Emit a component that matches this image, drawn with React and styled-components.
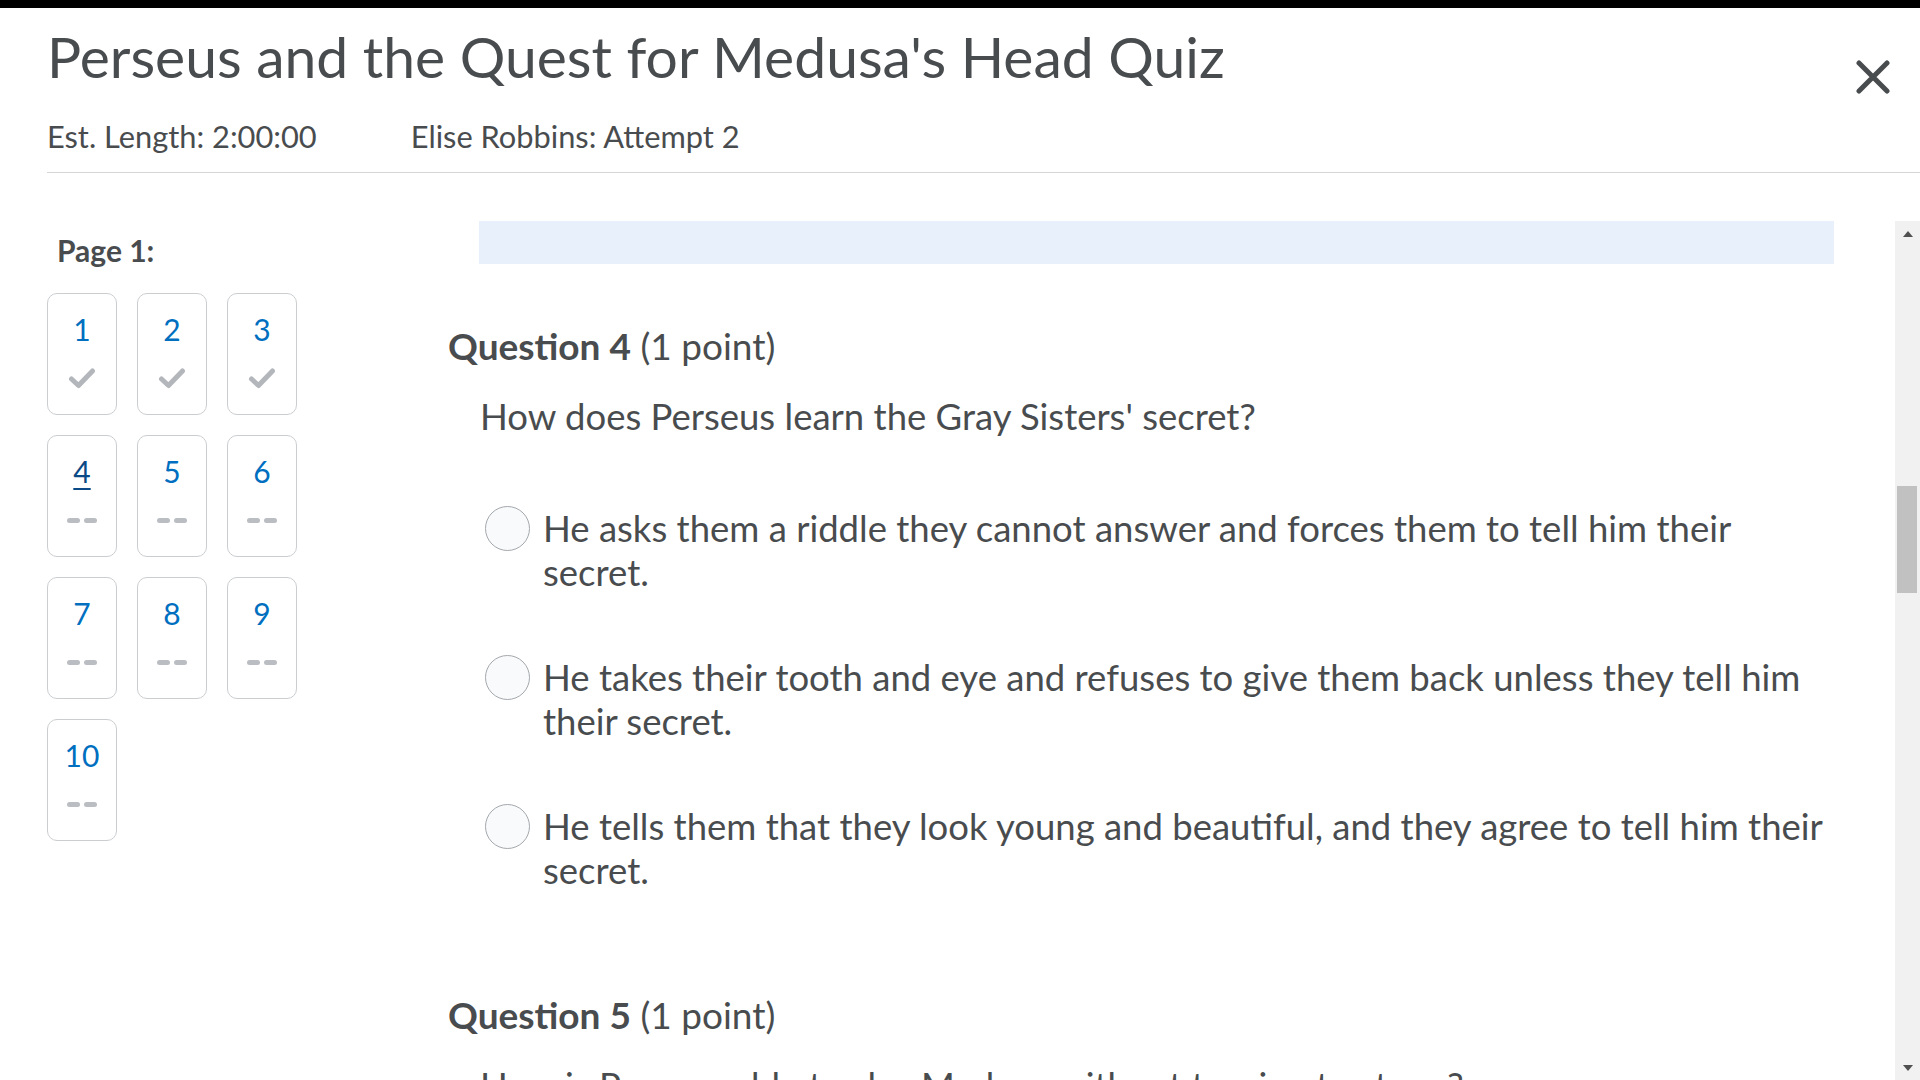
import React from 'react';
import styled, { createGlobalStyle } from 'styled-components';

const GlobalStyle = createGlobalStyle`
  html, body {
    margin: 0;
    padding: 0;
    background: #ffffff;
  }
  body {
    width: 1920px;
    height: 1080px;
    overflow: hidden;
    font-family: Lato, "Noto Sans", "Liberation Sans", sans-serif;
    color: #494c4e;
  }
  * { box-sizing: border-box; }
`;

const Page = styled.div`
  width: 1920px;
  height: 1080px;
  display: flex;
  flex-direction: column;
  overflow: hidden;
`;

const TopEdge = styled.div`
  flex: none;
  height: 8px;
  background: #000;
`;

const Header = styled.header`
  flex: none;
  padding-left: 47px;
`;

const TitleRow = styled.div`
  height: 82px;
  display: flex;
  justify-content: space-between;
  align-items: flex-start;
  padding-top: 15px;
`;

const Title = styled.h1`
  margin: 0;
  font-size: 57px;
  line-height: 67px;
  font-weight: 400;
  color: #494c4e;
`;

const CloseButton = styled.button`
  margin: 37px 30px 0 0;
  width: 34px;
  height: 34px;
  padding: 0;
  border: 0;
  background: none;
  display: flex;
  cursor: pointer;
`;

const Meta = styled.div`
  display: flex;
  gap: 94px;
  margin-top: 28px;
  font-size: 30.8px;
  line-height: 37px;
`;

const Divider = styled.div`
  margin-top: 17px;
  height: 1px;
  background: #d6d6d6;
`;

const Body = styled.div`
  flex: 1;
  min-height: 0;
  display: flex;
  margin-top: 48px;
`;

const Sidebar = styled.nav`
  flex: none;
  width: 420px;
  padding: 11px 0 0 47px;
`;

const PageLabel = styled.div`
  padding-left: 10px;
  font-size: 30px;
  line-height: 36px;
  font-weight: 700;
  color: #494c4e;
`;

const TileGrid = styled.div`
  margin-top: 25px;
  display: grid;
  grid-template-columns: repeat(3, 70px);
  column-gap: 20px;
  row-gap: 20px;
`;

const Tile = styled.div`
  width: 70px;
  height: 122px;
  border: 1px solid #cbced1;
  border-radius: 10px;
  background: #fff;
  display: flex;
  flex-direction: column;
  align-items: center;
  padding-top: 18px;
`;

const TileNumber = styled.span`
  font-size: 30px;
  line-height: 34px;
  color: ${(p) => (p.$current ? '#0b4a86' : '#006fbf')};
  text-decoration: ${(p) => (p.$current ? 'underline' : 'none')};
  text-decoration-thickness: 2px;
  text-underline-offset: 5px;
`;

const StatusSlot = styled.div`
  margin-top: 21px;
  height: 22px;
  display: flex;
  align-items: center;
  justify-content: center;
  gap: 4px;
`;

const Dash = styled.span`
  width: 13px;
  height: 5px;
  border-radius: 3px;
  background: #babec2;
`;

const Main = styled.main`
  flex: 1;
  min-width: 0;
  overflow: hidden;
  padding: 0 61px 0 28px;
`;

const Banner = styled.div`
  margin-left: 31px;
  height: 43px;
  background: #e8f1fb;
`;

const Question = styled.section`
  margin-top: 60px;
  & + & {
    margin-top: 101px;
  }
`;

const QuestionHeading = styled.h2`
  margin: 0;
  font-size: 37px;
  line-height: 44px;
  font-weight: 400;
  color: #494c4e;

  strong {
    font-weight: 700;
  }
`;

const QuestionBody = styled.div`
  padding-left: 32px;
`;

const Prompt = styled.p`
  margin: 26px 0 0;
  font-size: 36.5px;
  line-height: 44px;
`;

const AnswerList = styled.div`
  margin-top: 68px;
  display: flex;
  flex-direction: column;
  gap: 61px;
`;

const Answer = styled.label`
  display: flex;
  align-items: flex-start;
  gap: 13px;
  padding-left: 5px;
  cursor: pointer;
`;

const Radio = styled.span`
  flex: none;
  width: 45px;
  height: 45px;
  border-radius: 50%;
  border: 1px solid #a3a8ac;
  background: #f9fafc;
`;

const AnswerText = styled.span`
  max-width: 1288px;
  font-size: 36.5px;
  line-height: 44px;
`;

const ScrollTrack = styled.div`
  flex: none;
  width: 25px;
  background: #f1f1f1;
  display: flex;
  flex-direction: column;
`;

const ScrollButton = styled.div`
  flex: none;
  height: 25px;
  display: flex;
  align-items: center;
  justify-content: center;
  margin-top: ${(p) => (p.$down ? 'auto' : '0')};
`;

const Arrow = styled.span`
  width: 0;
  height: 0;
  border-left: 5px solid transparent;
  border-right: 5px solid transparent;
  ${(p) =>
    p.$down
      ? 'border-top: 6px solid #505050;'
      : 'border-bottom: 6px solid #505050;'}
`;

const Thumb = styled.div`
  margin: 240px 3px 0 2px;
  height: 107px;
  background: #c1c1c1;
`;

const Check = () => (
  <svg width="28" height="22" viewBox="0 0 28 22">
    <polyline
      points="3.5,12 10.5,18.5 24.5,4"
      fill="none"
      stroke="#b3b7bb"
      strokeWidth="5"
      strokeLinecap="round"
      strokeLinejoin="round"
    />
  </svg>
);

const CloseIcon = () => (
  <svg width="34" height="34" viewBox="0 0 34 34">
    <path
      d="M3 3 L31 31 M31 3 L3 31"
      stroke="#494c4e"
      strokeWidth="5"
      strokeLinecap="round"
      fill="none"
    />
  </svg>
);

const tiles = [
  { n: 1, done: true },
  { n: 2, done: true },
  { n: 3, done: true },
  { n: 4, current: true },
  { n: 5 },
  { n: 6 },
  { n: 7 },
  { n: 8 },
  { n: 9 },
  { n: 10 },
];

const answers = [
  'He asks them a riddle they cannot answer and forces them to tell him their secret.',
  'He takes their tooth and eye and refuses to give them back unless they tell him their secret.',
  'He tells them that they look young and beautiful, and they agree to tell him their secret.',
];

export default function App() {
  return (
    <>
      <GlobalStyle />
      <Page>
        <TopEdge />
        <Header>
          <TitleRow>
            <Title>Perseus and the Quest for Medusa's Head Quiz</Title>
            <CloseButton aria-label="Close">
              <CloseIcon />
            </CloseButton>
          </TitleRow>
          <Meta>
            <span>Est. Length: 2:00:00</span>
            <span>Elise Robbins: Attempt 2</span>
          </Meta>
          <Divider />
        </Header>
        <Body>
          <Sidebar>
            <PageLabel>Page 1:</PageLabel>
            <TileGrid>
              {tiles.map((t) => (
                <Tile key={t.n}>
                  <TileNumber $current={t.current}>{t.n}</TileNumber>
                  <StatusSlot>
                    {t.done ? (
                      <Check />
                    ) : (
                      <>
                        <Dash />
                        <Dash />
                      </>
                    )}
                  </StatusSlot>
                </Tile>
              ))}
            </TileGrid>
          </Sidebar>
          <Main>
            <Banner />
            <Question>
              <QuestionHeading>
                <strong>Question 4</strong> (1 point)
              </QuestionHeading>
              <QuestionBody>
                <Prompt>How does Perseus learn the Gray Sisters' secret?</Prompt>
                <AnswerList>
                  {answers.map((a) => (
                    <Answer key={a}>
                      <Radio />
                      <AnswerText>{a}</AnswerText>
                    </Answer>
                  ))}
                </AnswerList>
              </QuestionBody>
            </Question>
            <Question>
              <QuestionHeading>
                <strong>Question 5</strong> (1 point)
              </QuestionHeading>
              <QuestionBody>
                <Prompt>How is Perseus able to slay Medusa without turning to stone?</Prompt>
              </QuestionBody>
            </Question>
          </Main>
          <ScrollTrack>
            <ScrollButton>
              <Arrow />
            </ScrollButton>
            <Thumb />
            <ScrollButton $down>
              <Arrow $down />
            </ScrollButton>
          </ScrollTrack>
        </Body>
      </Page>
    </>
  );
}
